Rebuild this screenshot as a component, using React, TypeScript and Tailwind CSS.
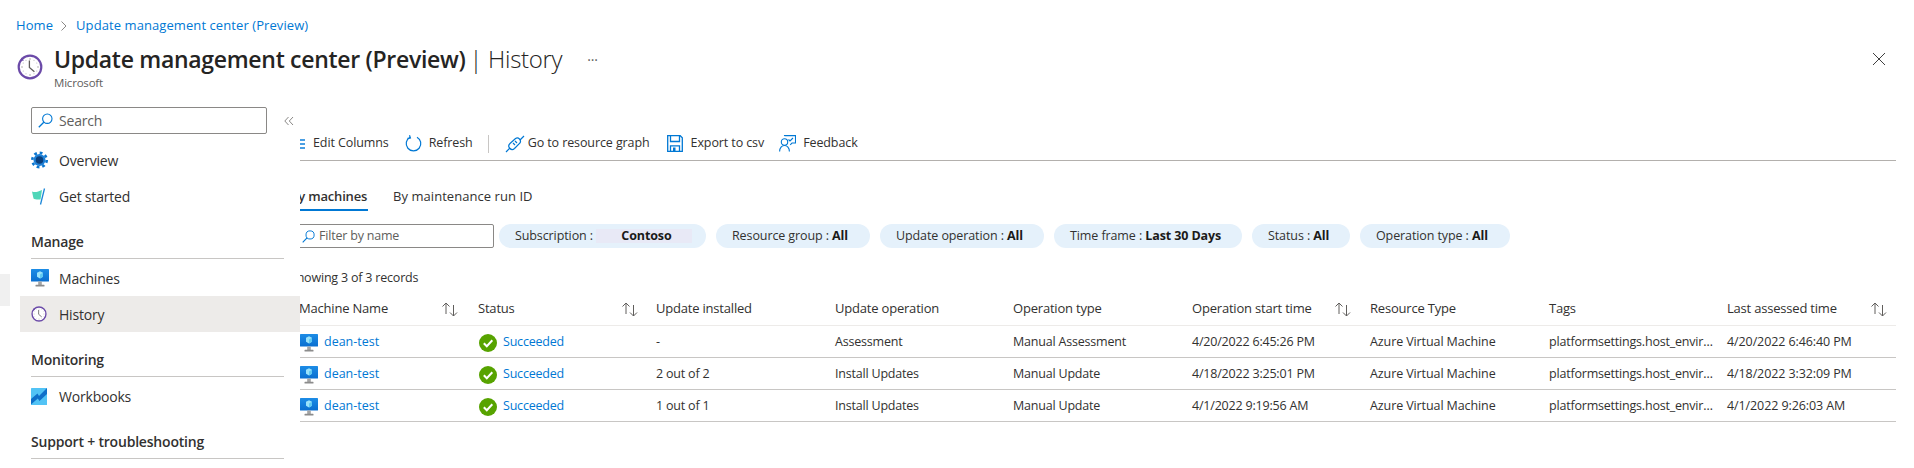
import React from "react";

const Clock = ({ s = 26 }: { s?: number }) => (
  <svg width={s} height={s} viewBox="0 0 26 26" className="shrink-0">
    <circle cx="13" cy="13" r="11.3" fill="#fff" stroke="#6b4aa8" strokeWidth="2.2" />
    <path d="M3 7l1.6-3.4L7 6.4" fill="#6b4aa8" />
    <g fill="#a8a6a4">
      <circle cx="13" cy="5" r=".8" /><circle cx="21" cy="13" r=".8" /><circle cx="13" cy="21" r=".8" /><circle cx="5" cy="13" r=".8" />
      <circle cx="17" cy="6.2" r=".5" /><circle cx="19.8" cy="9" r=".5" /><circle cx="19.8" cy="17" r=".5" /><circle cx="17" cy="19.8" r=".5" />
      <circle cx="9" cy="19.8" r=".5" /><circle cx="6.2" cy="17" r=".5" /><circle cx="6.2" cy="9" r=".5" /><circle cx="9" cy="6.2" r=".5" />
    </g>
    <path d="M12.4 6.5v7l5 4.2" fill="none" stroke="#605e5c" strokeWidth="1.3" />
  </svg>
);

const Gear = () => (
  <svg width="17" height="18" viewBox="0 0 17 18" className="shrink-0">
    <circle cx="8.5" cy="9" r="7.2" fill="none" stroke="#0b76cf" strokeWidth="2.6" strokeDasharray="2.8 2.85" />
    <circle cx="8.5" cy="9" r="6" fill="#1f80d6" />
    <circle cx="8.5" cy="9" r="3.8" fill="#0a3f7d" />
  </svg>
);

const Flag = () => (
  <svg width="15" height="17" viewBox="0 0 15 17" className="shrink-0">
    <path d="M1 3.5c3 1.3 6 .3 10-1.5L9.500 11.500C6.500 11.800 3.500 11.500 2.500 10.500Z" fill="#4fd6b8" />
    <path d="M13.500 .5 9.500 16.500" fill="none" stroke="#1a86d8" strokeWidth="1.300" />
  </svg>
);

const Monitor = () => (
  <svg width="18" height="18" viewBox="0 0 18 18" className="shrink-0">
    <defs>
      <linearGradient id="mon" x1="0" x2="0" y1="0" y2="1">
        <stop offset="0" stopColor="#1c8ce6" />
        <stop offset="1" stopColor="#0a6fd0" />
      </linearGradient>
    </defs>
    <rect x="0" y="0" width="18" height="12.500" rx=".6" fill="url(#mon)" />
    <path d="M9 2.200 12 3.800v4L9 9.600 6 7.800v-4Z" fill="#9ae3fb" />
    <path d="M9 5.500 12 3.800v4L9 9.600Z" fill="#5fc9f2" />
    <rect x="7.200" y="12.500" width="3.600" height="3.500" fill="#a5a5a5" />
    <rect x="4.500" y="15.800" width="9" height="1.600" rx=".5" fill="#8c8c8c" />
  </svg>
);

const Workbook = () => (
  <svg width="16" height="17" viewBox="0 0 16 17" className="shrink-0">
    <rect width="16" height="17" rx=".6" fill="#52c3f5" />
    <path d="M0 11 6.500 5.500 8 8 16 0v6L8.500 13 6.800 10.500 0 16.500Z" fill="#0f6fc9" />
  </svg>
);

const SearchIco = ({ c = "#0078d4", s = 15 }: { c?: string; s?: number }) => (
  <svg width={s} height={s} viewBox="0 0 15 15" fill="none" className="shrink-0">
    <circle cx="9.300" cy="5.700" r="4.700" stroke={c} strokeWidth="1.100" />
    <path d="M5.800 9.200 .8 14.200" stroke={c} strokeWidth="1.300" />
  </svg>
);

const Sort = () => (
  <svg width="18" height="15" viewBox="0 0 18 15" fill="none" stroke="#605e5c" strokeWidth="1" className="shrink-0">
    <path d="M5 12V1M1.500 4.500 5 1l3.500 3.500" />
    <path d="M12.500 3v11M9 10.500l3.500 3.500 3.500-3.500" />
  </svg>
);

const Check = () => (
  <svg width="18" height="18" viewBox="0 0 18 18" className="shrink-0">
    <circle cx="9" cy="9" r="9" fill="#57a300" />
    <path d="M4.800 9.300 7.800 12.300 13.300 6.300" fill="none" stroke="#fff" strokeWidth="2" />
  </svg>
);

const tool = "flex items-center text-[12.500px] tracking-[-0.1px] text-[#323130] whitespace-nowrap";

const Nav = ({ icon, label, active }: { icon: React.ReactNode; label: string; active?: boolean }) => (
  <div className={`h-9 flex items-center pl-[11px] text-[14px] text-[#323130] ${active ? "bg-[#edebe9]" : ""}`}>
    <span className="w-[28px] flex items-center">{icon}</span>
    {label}
  </div>
);

const Section = ({ label, mt }: { label: string; mt: string }) => (
  <div className={`${mt} ml-[11px] mr-[16px] h-[27px] flex items-start border-b border-[#c8c6c4] text-[14px] font-semibold text-[#323130] leading-[20px]`}>
    {label}
  </div>
);

const Pill = ({ w, k, v, children }: { w: string; k: string; v: string; children?: React.ReactNode }) => (
  <div className={`${w} relative h-6 shrink-0 rounded-full bg-[#e5f1fb] pl-4 flex items-center text-[12.500px] tracking-[-0.1px] text-[#323130] whitespace-pre`}>
    {children}
    <span className="relative">{k}</span>
    <span className="relative font-bold text-[#1b1a19]">{v}</span>
  </div>
);

const grid = "grid grid-cols-[188px_178px_179px_178px_179px_178px_179px_178px_169px]";

const Head = ({ label, sort, sx }: { label: string; sort?: boolean; sx?: string }) => (
  <div className={`flex items-center border-b border-[#edebe9] ${sx ?? ""}`}>
    <span className="whitespace-nowrap">{label}</span>
    {sort && <span className="ml-auto mr-[8px] flex"><Sort /></span>}
  </div>
);

const rows = [
  ["-", "Assessment", "Manual Assessment", "4/20/2022 6:45:26 PM", "4/20/2022 6:46:40 PM"],
  ["2 out of 2", "Install Updates", "Manual Update", "4/18/2022 3:25:01 PM", "4/18/2022 3:32:09 PM"],
  ["1 out of 1", "Install Updates", "Manual Update", "4/1/2022 9:19:56 AM", "4/1/2022 9:26:03 AM"],
];

export default function App() {
  return (
    <div className="relative w-[1914px] h-[468px] overflow-hidden bg-white font-['Open_Sans','Noto_Sans',sans-serif] tracking-[-0.2px]">
      <header className="h-[107px] flex flex-col">
        <div className="pt-4 pl-4 h-[36px] flex items-center text-[13px] tracking-[0.08px] text-[#0078d4] whitespace-nowrap">
          <span>Home</span>
          <svg width="10" height="12" viewBox="0 0 10 12" fill="none" stroke="#8a8886" className="ml-[6px] mr-[7px]"><path d="M2.500 1.500 7 6l-4.500 4.500" /></svg>
          <span>Update management center (Preview)</span>
        </div>
        <div className="flex pl-[17px] pr-7 mt-[8px]">
          <span className="mt-[10px]"><Clock /></span>
          <div className="ml-[11px] flex flex-col">
            <div className="text-[23px] leading-[30px] text-[#252423] whitespace-nowrap flex items-baseline">
              <span className="font-semibold tracking-[-0.3px]">Update management center (Preview)</span>
              <span className="font-light text-[24px] tracking-[-0.3px] ml-[4px] whitespace-pre">| History</span>
            </div>
            <div className="text-[11.500px] leading-[16px] text-[#605e5c] mt-[1px]">Microsoft</div>
          </div>
          <span className="ml-[25px] mt-[5px] text-[14px] text-[#605e5c]">···</span>
          <svg width="14" height="14" viewBox="0 0 14 14" stroke="#404040" className="ml-auto mt-[8px] shrink-0"><path d="M1 1l12 12M13 1 1 13" /></svg>
        </div>
      </header>

      <div className="flex">
        <aside className="relative w-[300px] shrink-0 pl-[20px]">
          <div className="absolute left-0 top-[167px] w-[10px] h-[32px] bg-[#f0f0f0]" />
          <div className="flex items-center">
            <div className="ml-[11px] w-[236px] h-[27px] rounded-[2px] border border-[#8a8886] flex items-center pl-[6px] text-[14px] text-[#605e5c]">
              <SearchIco />
              <span className="ml-[6px]">Search</span>
            </div>
            <svg width="10" height="10" viewBox="0 0 10 10" fill="none" stroke="#8a8886" className="ml-[17px] mt-[1px]"><path d="M4.500 1 .8 5l3.700 4M9 1 5.300 5 9 9" /></svg>
          </div>
          <div className="mt-[8px]">
            <Nav icon={<Gear />} label="Overview" />
            <Nav icon={<Flag />} label="Get started" />
          </div>
          <Section label="Manage" mt="mt-[18px]" />
          <div className="mt-[1px]">
            <Nav icon={<Monitor />} label="Machines" />
            <Nav icon={<Clock s={16} />} label="History" active />
          </div>
          <Section label="Monitoring" mt="mt-[18px]" />
          <div className="mt-[1px]">
            <Nav icon={<Workbook />} label="Workbooks" />
          </div>
          <Section label="Support + troubleshooting" mt="mt-[18px]" />
        </aside>

        <main className="flex-1 min-w-0 pr-[18px] overflow-hidden">
          <div className="-ml-[10px] pt-[19px]">
            <div className="h-[35px] pt-[1px] ml-[10px] border-b border-[#b3b0ad] flex items-center">
              <div className={`${tool} -ml-[10px]`}>
                <svg width="16" height="12" viewBox="0 0 16 12" fill="#4a9fe3" className="mr-[7px]"><rect x="10" y="1" width="5" height="2" /><rect x="10" y="5" width="5" height="2" /><rect x="10" y="9" width="5" height="2" /></svg>
                Edit Columns
              </div>
              <div className={`${tool} ml-[16px]`}>
                <svg width="17" height="17" viewBox="0 0 17 17" fill="none" stroke="#0078d4" strokeWidth="1.200" className="mr-[7px]"><path d="M5 2.200A7.300 7.300 0 1 0 12 2.200" /><path d="M4.500 .3 5.400 3 2.500 3.400" /></svg>
                Refresh
              </div>
              <div className="ml-[15px] h-[18px] w-px bg-[#c8c6c4]" />
              <div className={`${tool} ml-[16px]`}>
                <svg width="20" height="18" viewBox="0 0 20 18" fill="none" stroke="#0078d4" strokeWidth="1.200" className="mr-[3px]"><path d="M1 17l4-4M15 5l4-4" /><path d="M6 8.500 11.500 3.500a3.300 3.300 0 0 1 4.500 4.500L10.500 13.500a3.300 3.300 0 0 1-4.500-5Z" transform="translate(-1 0)" /><path d="M8 8l2 2M10 6l2 2" /></svg>
                Go to resource graph
              </div>
              <div className={`${tool} ml-[17px]`}>
                <svg width="16" height="17" viewBox="0 0 16 17" fill="none" stroke="#0078d4" strokeWidth="1.300" className="mr-[8px]"><path d="M.7.7h12.500l2.100 2.100v13.500H.7Z" /><path d="M3.500.7v5.800h9V.7" /><path d="M3.500 16.300v-5.500h9v5.500" /><rect x="6" y="12.500" width="2.500" height="3.800" fill="#0078d4" stroke="none" /></svg>
                Export to csv
              </div>
              <div className={`${tool} ml-[15px]`}>
                <svg width="17" height="17" viewBox="0 0 17 17" fill="none" stroke="#0078d4" strokeWidth="1.100" className="mr-[7px]"><path d="M5.500 1V.6h11V8H13l-1.800 1.800" /><circle cx="5.500" cy="7" r="3.200" /><path d="M.6 16.500c0-3.500 2.200-6 4.900-6s4.900 2.500 4.900 6" /><path d="M9.500 4.500 11 6l3-3" /></svg>
                Feedback
              </div>
            </div>

            <div className="h-[50px] flex text-[13px] tracking-[0.05px] text-[#323130] whitespace-nowrap">
              <div className="h-[50px] pt-[25px] leading-[20px] border-b-2 border-[#0078d4] font-semibold w-[78px] tracking-[-0.2px]">By machines</div>
              <div className="h-[50px] pt-[25px] leading-[20px] ml-[25px]">By maintenance run ID</div>
            </div>

            <div className="mt-[13px] flex items-center">
              <div className="w-[204px] h-[24px] shrink-0 border border-[#8a8886] rounded-[2px] flex items-center pl-[11px] text-[12.500px] text-[#605e5c]">
                <SearchIco s={13} />
                <span className="ml-[4px] pt-[1px]">Filter by name</span>
              </div>
              <div className="ml-[5px] flex gap-[10px]">
                <Pill w="w-[207px]" k="Subscription :         " v="Contoso">
                  <span className="absolute left-[97px] top-[5px] w-[96px] h-[14px] bg-[#e8e9f6]" />
                </Pill>
                <Pill w="w-[154px]" k="Resource group : " v="All" />
                <Pill w="w-[164px]" k="Update operation : " v="All" />
                <Pill w="w-[188px]" k="Time frame : " v="Last 30 Days" />
                <Pill w="w-[98px]" k="Status : " v="All" />
                <Pill w="w-[150px]" k="Operation type : " v="All" />
              </div>
            </div>

            <div className="mt-[20px] h-[20px] flex items-center text-[12.500px] text-[#323130] whitespace-nowrap">Showing 3 of 3 records</div>

            <div className={`${grid} mt-[5px] h-[33px] text-[13px] font-medium text-[#323130]`}>
              <Head label="Machine Name" sort sx="pl-[9px] pr-[11px]" />
              <Head label="Status" sort sx="pr-[9px]" />
              <Head label="Update installed" />
              <Head label="Update operation" />
              <Head label="Operation type" />
              <Head label="Operation start time" sort sx="pr-[10px]" />
              <Head label="Resource Type" />
              <Head label="Tags" />
              <Head label="Last assessed time" sort />
            </div>
            {rows.map((r, i) => (
              <div key={i} className={`${grid} h-[32px] border-b border-[#c8c6c4] text-[12.500px] text-[#323130] items-center whitespace-nowrap`}>
                <div className="pl-[10px] pt-[2px] flex items-center text-[#0078d4] tracking-normal"><Monitor /><span className="ml-[6px] -mt-[1px]">dean-test</span></div>
                <div className="pl-[1px] pt-[2px] flex items-center text-[#0078d4]"><Check /><span className="ml-[6px] -mt-[1px]">Succeeded</span></div>
                <div className="pt-[1px]">{r[0]}</div>
                <div className="pt-[1px]">{r[1]}</div>
                <div className="pt-[1px]">{r[2]}</div>
                <div className="pt-[1px]">{r[3]}</div>
                <div className="pt-[1px] tracking-[-0.1px]">Azure Virtual Machine</div>
                <div className="pt-[1px] pr-[12px] truncate">platformsettings.host_environment</div>
                <div className="pt-[1px] tracking-[-0.1px]">{r[4]}</div>
              </div>
            ))}
          </div>
        </main>
      </div>
    </div>
  );
}
